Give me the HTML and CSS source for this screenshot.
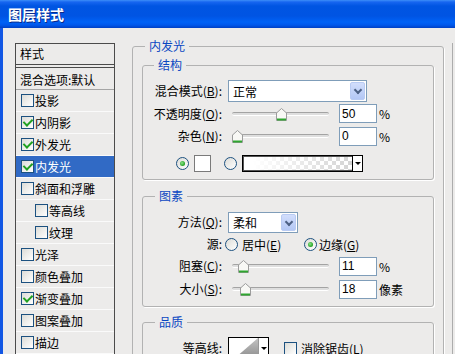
FILE: index.html
```html
<!DOCTYPE html>
<html lang="zh-CN">
<head>
    <meta charset="UTF-8">
    <meta name="viewport" content="width=device-width, initial-scale=1.0">
    <title>图层样式</title>
    <link rel="stylesheet" href="styles.css">
</head>
<body>

    <div class="titlebar">图层样式</div>

    <div class="client">

        <!-- Style list -->
        <div class="style-list">
            <div class="list-head">样式</div>
            <div class="list-row blend">混合选项:默认</div>
            <div class="list-row"><span class="cb"></span>投影</div>
            <div class="list-row"><span class="cb on"></span>内阴影</div>
            <div class="list-row"><span class="cb on"></span>外发光</div>
            <div class="list-row active"><span class="cb on"></span>内发光</div>
            <div class="list-row"><span class="cb"></span>斜面和浮雕</div>
            <div class="list-row indent"><span class="cb"></span>等高线</div>
            <div class="list-row indent"><span class="cb"></span>纹理</div>
            <div class="list-row"><span class="cb"></span>光泽</div>
            <div class="list-row"><span class="cb"></span>颜色叠加</div>
            <div class="list-row"><span class="cb on"></span>渐变叠加</div>
            <div class="list-row"><span class="cb"></span>图案叠加</div>
            <div class="list-row"><span class="cb"></span>描边</div>
        </div>

        <!-- Inner glow settings -->
        <div class="panel">
            <fieldset class="group outer">
                <legend>内发光</legend>

                <fieldset class="group sub">
                    <legend>结构</legend>
                    <div class="row">
                        <span class="lbl">混合模式(<u>B</u>):</span>
                        <div class="select mode"><span>正常</span><i class="drop"></i></div>
                    </div>
                    <div class="row tall">
                        <span class="lbl">不透明度(<u>O</u>):</span>
                        <div class="slider">
                            <div class="track"></div>
                            <svg class="thumb" style="left: 48px" width="11" height="13" viewBox="0 0 11 13"><path d="M0.5 12.5V5L5.5 0.5L10.5 5V12.5Z" fill="#f8f8f5" stroke="#9c9c9c"/><path d="M1 11.5H10" stroke="#2fa52f" stroke-width="2"/></svg>
                        </div>
                        <input class="num" type="text" value="50">
                        <span class="unit">%</span>
                    </div>
                    <div class="row">
                        <span class="lbl">杂色(<u>N</u>):</span>
                        <div class="slider">
                            <div class="track"></div>
                            <svg class="thumb" style="left: 4px" width="11" height="13" viewBox="0 0 11 13"><path d="M0.5 12.5V5L5.5 0.5L10.5 5V12.5Z" fill="#f8f8f5" stroke="#9c9c9c"/><path d="M1 11.5H10" stroke="#2fa52f" stroke-width="2"/></svg>
                        </div>
                        <input class="num" type="text" value="0">
                        <span class="unit">%</span>
                    </div>
                    <div class="row colors">
                        <span class="radio on"></span>
                        <span class="swatch"></span>
                        <span class="radio"></span>
                        <div class="gradient"><span class="fill"></span><span class="arrow"></span></div>
                    </div>
                </fieldset>

                <fieldset class="group sub pattern">
                    <legend>图素</legend>
                    <div class="row">
                        <span class="lbl">方法(<u>Q</u>):</span>
                        <div class="select method"><span>柔和</span><i class="drop"></i></div>
                    </div>
                    <div class="row">
                        <span class="lbl">源:</span>
                        <span class="radio first"></span>
                        <span class="opt">居中(<u>E</u>)</span>
                        <span class="radio on"></span>
                        <span class="opt-last">边缘(<u>G</u>)</span>
                    </div>
                    <div class="row">
                        <span class="lbl">阻塞(<u>C</u>):</span>
                        <div class="slider">
                            <div class="track"></div>
                            <svg class="thumb" style="left: 10px" width="11" height="13" viewBox="0 0 11 13"><path d="M0.5 12.5V5L5.5 0.5L10.5 5V12.5Z" fill="#f8f8f5" stroke="#9c9c9c"/><path d="M1 11.5H10" stroke="#2fa52f" stroke-width="2"/></svg>
                        </div>
                        <input class="num" type="text" value="11">
                        <span class="unit">%</span>
                    </div>
                    <div class="row last">
                        <span class="lbl">大小(<u>S</u>):</span>
                        <div class="slider">
                            <div class="track"></div>
                            <svg class="thumb" style="left: 12px" width="11" height="13" viewBox="0 0 11 13"><path d="M0.5 12.5V5L5.5 0.5L10.5 5V12.5Z" fill="#f8f8f5" stroke="#9c9c9c"/><path d="M1 11.5H10" stroke="#2fa52f" stroke-width="2"/></svg>
                        </div>
                        <input class="num" type="text" value="18">
                        <span class="unit">像素</span>
                    </div>
                </fieldset>

                <fieldset class="group sub quality">
                    <legend>品质</legend>
                    <div class="row contour-row">
                        <span class="lbl">等高线:</span>
                        <div class="contour">
                            <svg class="curve" width="29" height="20" viewBox="0 0 29 20">
                                <defs>
                                    <linearGradient id="cg" x1="0" y1="0" x2="0" y2="1">
                                        <stop offset="0" stop-color="#c4c4c4"/>
                                        <stop offset="1" stop-color="#8e8e8e"/>
                                    </linearGradient>
                                </defs>
                                <path d="M6 20L29 0V20Z" fill="url(#cg)"/>
                            </svg>
                            <span class="arrow"></span>
                        </div>
                        <span class="cb aa"></span>
                        <span class="aa-text">消除锯齿(<u>L</u>)</span>
                    </div>
                </fieldset>
            </fieldset>
        </div>

        <div class="side"></div>
    </div>

</body>
</html>
```

FILE: styles.css
```css
/* Global */
* {
    box-sizing: border-box;
}

body {
    margin: 0;
    width: 455px;
    height: 354px;
    overflow: hidden;
    background-color: #ecebea;
    font-family: "Noto Sans CJK SC", "Liberation Sans", sans-serif;
    font-size: 12px;
    color: #000;
}

u {
    text-decoration-thickness: 1px;
    text-underline-offset: 1px;
}

/* Title bar */
.titlebar {
    height: 28px;
    padding-left: 8px;
    line-height: 28px;
    font-size: 14px;
    font-weight: bold;
    color: #fff;
    text-shadow: 1px 1px 0 #0a2a8a;
    background: linear-gradient(#3d8ff8 0, #1766f0 2px, #0055e2 6px, #0054e3 16px, #0062f6 22px, #0058ec 25px, #0040c4 28px);
}

.client {
    display: flex;
    align-items: flex-start;
    height: 326px;
    padding-left: 12px;
    border-left: 3px solid #1257e4;
    overflow: hidden;
}

/* Style list */
.style-list {
    flex: none;
    width: 100px;
    margin-top: 15px;
    border: 1px solid #4b4b4b;
    border-bottom: none;
}

.list-head {
    height: 24px;
    padding: 3px 0 0 4px;
    line-height: 14px;
    border-bottom: 4px double #4b4b4b;
}

.list-row {
    display: flex;
    align-items: center;
    height: 22px;
    padding-left: 5px;
    line-height: 14px;
    white-space: nowrap;
    border-bottom: 1px solid #fafafa;
}

.list-row.blend {
    padding: 2px 0 0 4px;
    border-bottom-color: #a5a5a5;
}

.list-row.indent {
    padding-left: 19px;
}

.list-row.active {
    background-color: #316ac5;
    color: #fff;
}

/* Checkbox and radio */
.cb {
    position: relative;
    flex: none;
    width: 13px;
    height: 13px;
    margin-right: 1px;
    border: 1px solid #1c5180;
    background: linear-gradient(135deg, #dcdcd7, #fff);
}

.cb.on::after {
    content: "";
    position: absolute;
    left: 3px;
    top: 0;
    width: 4px;
    height: 7px;
    border: solid #21a121;
    border-width: 0 2px 2px 0;
    transform: rotate(45deg);
}

.radio {
    position: relative;
    flex: none;
    width: 13px;
    height: 13px;
    border-radius: 50%;
    border: 1px solid #1c5180;
    background: linear-gradient(135deg, #dcdcd7, #fff);
}

.radio.on::after {
    content: "";
    position: absolute;
    left: 3px;
    top: 3px;
    width: 5px;
    height: 5px;
    border-radius: 50%;
    background: radial-gradient(circle at 40% 40%, #8be38b, #21a121 70%);
}

/* Right panel */
.panel {
    flex: none;
    width: 312px;
    margin: 11px 0 0 17px;
}

.group {
    min-width: 0;
    margin: 0;
    padding: 0;
    border: 1px solid #b2b2b2;
    border-radius: 3px;
    box-shadow: 1px 1px 0 #fff;
}

.group legend {
    margin-left: 12px;
    padding: 0 4px;
    line-height: 14px;
    font-size: 12px;
    color: #0a47c2;
}

.outer {
    height: 330px;
}

.sub {
    margin: 5px 9px 0;
    padding: 8px 0 5px;
}

.sub legend {
    margin-left: 11px;
}

.pattern {
    margin-top: 9px;
}

.pattern legend,
.quality legend {
    margin-left: 12px;
}

.quality {
    margin-top: 8px;
    padding-top: 7px;
    height: 60px;
}

/* Form rows */
.row {
    display: flex;
    align-items: center;
    height: 22px;
    white-space: nowrap;
}

.row.tall {
    height: 23px;
}

.row.last {
    height: 24px;
}

.lbl {
    flex: none;
    width: 79px;
    margin-right: 6px;
    text-align: right;
    line-height: 14px;
}

/* Dropdown */
.select {
    display: flex;
    align-items: center;
    padding-left: 4px;
    border: 1px solid #7f9db9;
    background-color: #fff;
}

.select.mode {
    width: 139px;
    height: 22px;
}

.select.method {
    width: 70px;
    height: 21px;
}

.drop {
    position: relative;
    width: 15px;
    height: calc(100% - 2px);
    margin-left: auto;
    margin-right: 1px;
    border: 1px solid #b9cbf3;
    border-radius: 2px;
    background: linear-gradient(#d2defc, #b3c7f5);
}

.drop::after {
    content: "";
    position: absolute;
    left: 4px;
    top: 4px;
    width: 4px;
    height: 4px;
    border: solid #4d6185;
    border-width: 0 2px 2px 0;
    transform: rotate(45deg);
}

/* Slider */
.slider {
    position: relative;
    flex: none;
    display: flex;
    align-items: center;
    width: 104px;
    height: 100%;
    margin-right: 7px;
}

.track {
    flex: 1;
    height: 4px;
    margin: 0 3px 0 4px;
    border-top: 1px solid #a3a3a3;
    border-bottom: 1px solid #fff;
    border-radius: 2px;
    background-color: #dedede;
}

.thumb {
    position: absolute;
    top: 50%;
    margin-top: -6px;
}

.num {
    flex: none;
    width: 38px;
    height: 19px;
    padding: 0 0 0 2px;
    border: 1px solid #7f9db9;
    font: 12px "Liberation Sans", sans-serif;
    color: #000;
}

.unit {
    margin-left: 2px;
}

/* Color choice */
.row.colors {
    margin-top: 5px;
    padding-left: 33px;
}

.swatch {
    flex: none;
    width: 17px;
    height: 17px;
    margin: 0 13px 0 5px;
    border: 1px solid #7a7a7a;
    background-color: #fff;
}

.gradient {
    display: flex;
    width: 121px;
    height: 17px;
    margin-left: 5px;
    border: 1px solid #000;
    box-shadow: inset 0 0 0 1px #555;
}

.gradient .fill {
    flex: 1;
    margin: 1px 0 1px 1px;
    background:
        linear-gradient(to right, #fff 8%, rgba(255, 255, 255, 0)),
        conic-gradient(#d4d4d4 25%, #fff 0 50%, #d4d4d4 0 75%, #fff 0) 0 0 / 8px 8px;
}

.arrow {
    display: flex;
    align-items: center;
    justify-content: center;
    width: 10px;
    border-left: 1px solid #000;
    background-color: #fff;
}

.arrow::after {
    content: "";
    border-left: 3px solid transparent;
    border-right: 3px solid transparent;
    border-top: 3px solid #000;
}

/* Source options */
.radio.first {
    margin-left: -3px;
}

.opt {
    width: 66px;
    padding-left: 4px;
}

.opt-last {
    padding-left: 2px;
}

/* Quality */
.contour-row {
    height: 24px;
}

.contour {
    display: flex;
    flex: none;
    width: 41px;
    height: 22px;
    border: 1px solid #000;
    background-color: #fff;
}

.curve {
    flex: none;
    align-self: flex-end;
}

.contour .arrow {
    width: 10px;
    margin-left: auto;
    background-color: transparent;
    border-left: 1px solid #999;
}

.cb.aa {
    margin-left: 15px;
}

.aa-text {
    margin-left: 3px;
}

/* Right divider */
.side {
    flex: none;
    width: 10px;
    height: 330px;
    margin: 15px 0 0 8px;
    border-left: 1px solid #acacac;
}
```
